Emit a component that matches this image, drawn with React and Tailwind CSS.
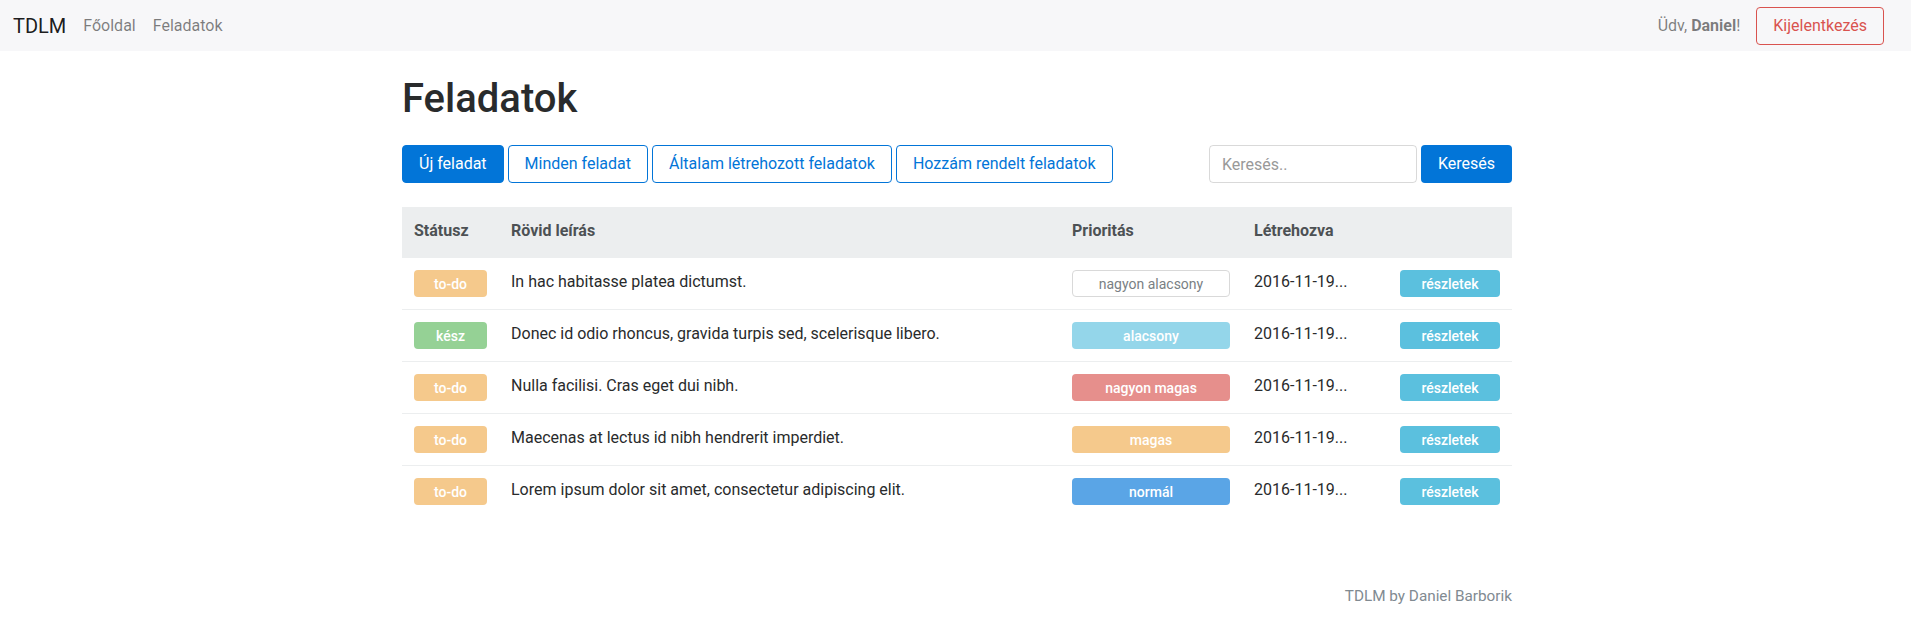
import React from "react";

const rows = [
  { status: "to-do", desc: "In hac habitasse platea dictumst.", prio: "nagyon alacsony" },
  { status: "kész", desc: "Donec id odio rhoncus, gravida turpis sed, scelerisque libero.", prio: "alacsony" },
  { status: "to-do", desc: "Nulla facilisi. Cras eget dui nibh.", prio: "nagyon magas" },
  { status: "to-do", desc: "Maecenas at lectus id nibh hendrerit imperdiet.", prio: "magas" },
  { status: "to-do", desc: "Lorem ipsum dolor sit amet, consectetur adipiscing elit.", prio: "normál" },
];

const statusCls = {
  "to-do": "bg-[#f5c98c]",
  "kész": "bg-[#95d195]",
};

const prioCls = {
  "nagyon alacsony": "bg-white border border-[#d9d9d9] text-[#7a7f84] font-normal",
  "alacsony": "bg-[#94d6ea] text-white font-medium",
  "nagyon magas": "bg-[#e68f8c] text-white font-medium",
  "magas": "bg-[#f5c98c] text-white font-medium",
  "normál": "bg-[#5aa5e6] text-white font-medium",
};

export default function App() {
  return (
    <div className="min-h-[639px] bg-white text-[#292b2c] text-[16px] leading-6" style={{ fontFamily: "Roboto, 'Liberation Sans', sans-serif" }}>
      <nav className="h-[51px] bg-[#f7f7f9] flex items-center pl-[13px] pr-[27px]">
        <span className="text-[20px] leading-[30px] text-[rgba(0,0,0,0.9)] mr-[17px]">TDLM</span>
        <div className="flex gap-[17px] text-[rgba(0,0,0,0.5)]">
          <span>Főoldal</span>
          <span>Feladatok</span>
        </div>
        <div className="ml-auto flex items-center gap-4">
          <span className="text-[rgba(0,0,0,0.5)]">Üdv, <strong className="font-bold">Daniel</strong>!</span>
          <button className="h-[38px] px-4 border border-[#d9534f] text-[#d9534f] rounded">Kijelentkezés</button>
        </div>
      </nav>

      <main className="w-[1110px] ml-[402px]">
        <h1 className="mt-[26px] text-[40px] leading-[44px] font-medium">Feladatok</h1>
        <div className="mt-[24px] flex items-center">
          <div className="flex gap-1">
            <button className="h-[38px] px-4 rounded bg-[#0275d8] border border-[#0275d8] text-white">Új feladat</button>
            <button className="h-[38px] px-4 rounded border border-[#0275d8] text-[#0275d8]">Minden feladat</button>
            <button className="h-[38px] px-4 rounded border border-[#0275d8] text-[#0275d8]">Általam létrehozott feladatok</button>
            <button className="h-[38px] px-4 rounded border border-[#0275d8] text-[#0275d8]">Hozzám rendelt feladatok</button>
          </div>
          <div className="ml-auto flex gap-[4px]">
            <input
              className="w-[208px] h-[38px] px-3 rounded border border-[rgba(0,0,0,0.15)] placeholder:text-[#999] outline-none"
              placeholder="Keresés.."
            />
            <button className="w-[91px] h-[38px] rounded bg-[#0275d8] text-white">Keresés</button>
          </div>
        </div>

        <div className="mt-[24px]">
          <div className="grid grid-cols-[97px_561px_182px_146px_124px] h-[50px] bg-[#eceeef] font-bold text-[#4d5154]">
            <div className="px-3 pt-3">Státusz</div>
            <div className="px-3 pt-3">Rövid leírás</div>
            <div className="px-3 pt-3">Prioritás</div>
            <div className="px-3 pt-3">Létrehozva</div>
            <div className="px-3 pt-3"></div>
          </div>
          {rows.map((r, i) => (
            <div key={i} className="grid grid-cols-[97px_561px_182px_146px_124px] border-t border-[#eceeef]">
              <div className="p-3">
                <div className={`h-[27px] rounded flex items-center justify-center text-white font-medium text-[14px] ${statusCls[r.status]}`}>{r.status}</div>
              </div>
              <div className="p-3">{r.desc}</div>
              <div className="p-3">
                <div className={`h-[27px] rounded flex items-center justify-center text-[14px] ${prioCls[r.prio]}`}>{r.prio}</div>
              </div>
              <div className="p-3">2016-11-19...</div>
              <div className="p-3">
                <div className="h-[27px] rounded bg-[#5bc0de] text-white font-medium text-[14px] flex items-center justify-center">részletek</div>
              </div>
            </div>
          ))}
        </div>

        <footer className="mt-[67px] text-right text-[15.3px] text-[#818a91]">TDLM by Daniel Barborik</footer>
      </main>
    </div>
  );
}
